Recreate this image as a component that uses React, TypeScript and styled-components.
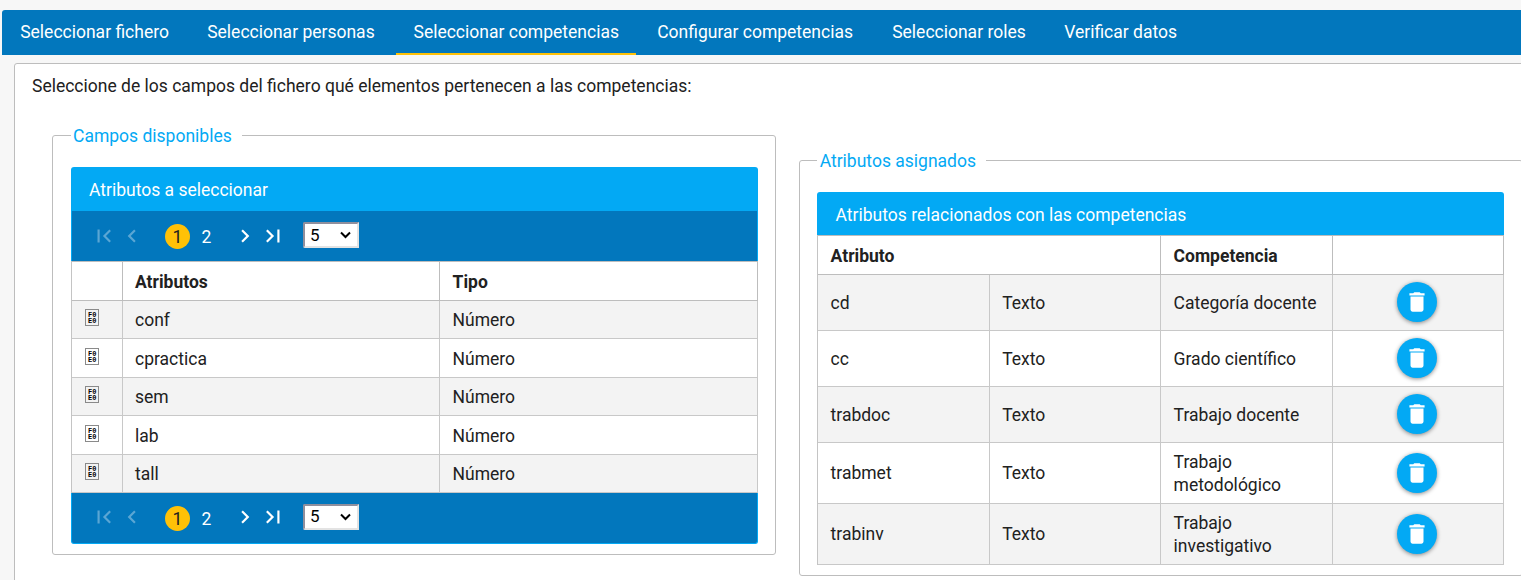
import React from "react";
import styled, { createGlobalStyle } from "styled-components";

const GlobalStyle = createGlobalStyle`
  * { box-sizing: border-box; }
  html, body { margin: 0; height: 580px; overflow: hidden; }
  body {
    background: #f7f7f7;
    color: #212121;
    font: 17.5px/23px Roboto, "Liberation Sans", sans-serif;
  }
`;

const Page = styled.div`
  height: 580px;
  overflow: hidden;
  padding: 10px 0 0 2px;
`;

const TabBar = styled.nav`
  display: flex;
  gap: 3px;
  height: 45px;
  background: #0277bd;
  border-radius: 3px 0 0 0;
`;

const Tab = styled.a<{ $active?: boolean; $width: number }>`
  width: ${(p) => p.$width}px;
  padding: 11px 0 0 ${(p) => (p.$active ? 17.5 : 18.2)}px;
  color: #fff;
  white-space: nowrap;
  border-bottom: 2px solid ${(p) => (p.$active ? "#ffc107" : "transparent")};
`;

const Panel = styled.main`
  width: 1540px;
  height: 560px;
  margin: 8px 0 0 12px;
  padding: 11px 0 0 17px;
  background: #fff;
  border: 1px solid #bdbdbd;
  border-radius: 3px;
`;

const Intro = styled.p`
  margin: 0;
`;

const Columns = styled.div`
  display: flex;
  align-items: flex-start;
  gap: 23px;
  margin-left: 20px;
`;

const Group = styled.fieldset<{ $top: number; $height: number; $inset: number }>`
  flex: none;
  width: 724px;
  height: ${(p) => p.$height}px;
  margin: ${(p) => p.$top}px 0 0;
  padding: 21px 0 0 ${(p) => p.$inset}px;
  border: 1px solid #bdbdbd;
  border-radius: 3px;
`;

const GroupTitle = styled.legend<{ $indent: number }>`
  height: 21px;
  padding: 0 10px 0 ${(p) => p.$indent}px;
  line-height: 22px;
  color: #03a9f4;
`;

const TableTitle = styled.div<{ $height: number; $indent: number }>`
  width: 687px;
  height: ${(p) => p.$height}px;
  padding-left: ${(p) => p.$indent}px;
  line-height: 47px;
  color: #fff;
  background: #03a9f4;
  border-radius: 3px 3px 0 0;
`;

const PagerBar = styled.div<{ $bottom?: boolean }>`
  display: flex;
  align-items: center;
  width: 687px;
  height: ${(p) => (p.$bottom ? 51 : 50)}px;
  padding: 0 0 ${(p) => (p.$bottom ? 1 : 0)}px 19px;
  color: #fff;
  background: #0277bd;
  border: 0 solid #03a9f4;
  border-width: 0 1px ${(p) => (p.$bottom ? 1 : 0)}px;
  border-radius: ${(p) => (p.$bottom ? "0 0 3px 3px" : "0")};
`;

const PagerIcon = styled.svg<{ $gap?: number; $off?: boolean }>`
  flex: none;
  width: 26px;
  height: 26px;
  margin: 0 0 1px ${(p) => p.$gap ?? 0}px;
  fill: #fff;
  opacity: ${(p) => (p.$off ? 0.35 : 1)};
`;

const PageNumber = styled.span<{ $current?: boolean }>`
  width: 25px;
  height: 25px;
  margin: 1px 0 0 ${(p) => (p.$current ? 20 : 4)}px;
  line-height: 26px;
  text-align: center;
  border-radius: 50%;
  color: ${(p) => (p.$current ? "#212121" : "#fff")};
  background: ${(p) => (p.$current ? "#ffc107" : "transparent")};
`;

const SizeSelect = styled.div`
  display: flex;
  align-items: center;
  justify-content: space-between;
  width: 56px;
  height: 26px;
  margin: 0 0 2px 17px;
  padding: 0 6px 0 5px;
  color: #000;
  background: #fff;
  border: 2px solid;
  border-color: #8f8f9d #e3e3e3 #e3e3e3 #8f8f9d;
  border-radius: 2px 0 0 2px;
  font-size: 17px;
`;

const Grid = styled.table`
  width: 687px;
  table-layout: fixed;
  border-spacing: 0;
  border-left: 1px solid #c4c4c4;
`;

const Row = styled.tr<{ $height: number; $shaded?: boolean }>`
  height: ${(p) => p.$height}px;
  background: ${(p) => (p.$shaded ? "#f3f3f3" : "#fff")};
`;

const Head = styled.th<{ $indent?: number }>`
  padding: 2px 0 0 ${(p) => p.$indent ?? 12.6}px;
  text-align: left;
  font-weight: 700;
  border: 1px solid #bdbdbd;
  border-left: 0;
`;

const Cell = styled.td<{ $drop?: number; $indent?: number }>`
  padding: ${(p) => p.$drop ?? 2}px 0 0 ${(p) => p.$indent ?? 12.6}px;
  vertical-align: middle;
  border: 1px solid #c8c8c8;
  border-width: 0 1px 1px 0;
`;

const ActionCell = styled(Cell)`
  padding: 0 2px 1px 0;
`;

const MissingGlyph = styled.span`
  display: block;
  width: 14px;
  height: 17px;
  margin: 0 0 4px;
  padding: 2px 0 0 2px;
  border: 1px solid #8a8a8a;
  font: 700 7px/6px "Liberation Mono", monospace;
  color: #000;
`;

const DeleteButton = styled.button`
  display: flex;
  align-items: center;
  justify-content: center;
  width: 40px;
  height: 40px;
  margin: 0 auto;
  padding: 0;
  border: 0;
  border-radius: 50%;
  background: #03a9f4;
  box-shadow: 0 1px 4px rgba(0, 0, 0, 0.45);
`;

const ICONS = {
  first: "M18.41 16.59 13.82 12l4.59-4.59L17 6l-6 6 6 6zM6 6h2v12H6z",
  prev: "M15.41 7.41 14 6l-6 6 6 6 1.41-1.41L10.83 12z",
  next: "M10 6 8.59 7.41 13.17 12l-4.58 4.59L10 18l6-6z",
  last: "M5.59 7.41 10.18 12l-4.59 4.59L7 18l6-6-6-6zM16 6h2v12h-2z",
  trash:
    "M6 19c0 1.1.9 2 2 2h8c1.1 0 2-.9 2-2V7H6zM19 4h-3.5l-1-1h-5l-1 1H5v2h14z",
};

const tabs = [
  { label: "Seleccionar fichero", width: 184 },
  { label: "Seleccionar personas", width: 204 },
  { label: "Seleccionar competencias", width: 240 },
  { label: "Configurar competencias", width: 232 },
  { label: "Seleccionar roles", width: 169 },
  { label: "Verificar datos", width: 150 },
];

const fields = [
  { name: "conf", height: 38 },
  { name: "cpractica", height: 39 },
  { name: "sem", height: 38 },
  { name: "lab", height: 39 },
  { name: "tall", height: 38 },
];

const assigned = [
  { name: "cd", skill: "Categoría docente", height: 56, drop: 2 },
  { name: "cc", skill: "Grado científico", height: 56, drop: 2 },
  { name: "trabdoc", skill: "Trabajo docente", height: 56, drop: 2 },
  { name: "trabmet", skill: "Trabajo metodológico", height: 61, drop: 0 },
  { name: "trabinv", skill: "Trabajo investigativo", height: 61, drop: 0 },
];

function Pager({ bottom }: { bottom?: boolean }) {
  return (
    <PagerBar $bottom={bottom}>
      <PagerIcon viewBox="0 0 24 24" $off><path d={ICONS.first} /></PagerIcon>
      <PagerIcon viewBox="0 0 24 24" $off $gap={2}><path d={ICONS.prev} /></PagerIcon>
      <PageNumber $current>1</PageNumber>
      <PageNumber>2</PageNumber>
      <PagerIcon viewBox="0 0 24 24" $gap={13}><path d={ICONS.next} /></PagerIcon>
      <PagerIcon viewBox="0 0 24 24" $gap={2}><path d={ICONS.last} /></PagerIcon>
      <SizeSelect>
        <span>5</span>
        <svg width="11" height="8" viewBox="0 0 11 8" fill="none" stroke="#000" strokeWidth="2">
          <path d="M1 1.5 5.5 6 10 1.5" />
        </svg>
      </SizeSelect>
    </PagerBar>
  );
}

export default function App() {
  return (
    <Page>
      <GlobalStyle />
      <TabBar>
        {tabs.map((t, i) => (
          <Tab key={t.label} $width={t.width} $active={i === 2}>{t.label}</Tab>
        ))}
      </TabBar>
      <Panel>
        <Intro>Seleccione de los campos del fichero qué elementos pertenecen a las competencias:</Intro>
        <Columns>
          <Group $top={27} $height={430} $inset={18}>
            <GroupTitle $indent={2}>Campos disponibles</GroupTitle>
            <TableTitle $height={44} $indent={18}>Atributos a seleccionar</TableTitle>
            <Pager />
            <Grid>
              <colgroup>
                <col style={{ width: 51 }} />
                <col style={{ width: 317 }} />
                <col style={{ width: 318 }} />
              </colgroup>
              <tbody>
                <Row $height={40}>
                  <Head />
                  <Head $indent={12}>Atributos</Head>
                  <Head>Tipo</Head>
                </Row>
                {fields.map((f, i) => (
                  <Row key={f.name} $height={f.height} $shaded={i % 2 === 0}>
                    <Cell $drop={0} $indent={13}><MissingGlyph>F0<br />E0</MissingGlyph></Cell>
                    <Cell $indent={12}>{f.name}</Cell>
                    <Cell>Número</Cell>
                  </Row>
                ))}
              </tbody>
            </Grid>
            <Pager bottom />
          </Group>
          <Group $top={52} $height={426} $inset={17}>
            <GroupTitle $indent={2.7}>Atributos asignados</GroupTitle>
            <TableTitle $height={43} $indent={18.6}>Atributos relacionados con las competencias</TableTitle>
            <Grid>
              <colgroup>
                <col style={{ width: 172 }} />
                <col style={{ width: 171 }} />
                <col style={{ width: 172 }} />
                <col style={{ width: 171 }} />
              </colgroup>
              <tbody>
                <Row $height={40}>
                  <Head colSpan={2}>Atributo</Head>
                  <Head>Competencia</Head>
                  <Head />
                </Row>
                {assigned.map((a, i) => (
                  <Row key={a.name} $height={a.height} $shaded={i % 2 === 0}>
                    <Cell $drop={a.drop}>{a.name}</Cell>
                    <Cell $drop={a.drop} $indent={12.2}>Texto</Cell>
                    <Cell>{a.skill}</Cell>
                    <ActionCell>
                      <DeleteButton aria-label="Eliminar">
                        <svg width="26" height="26" viewBox="0 0 24 24" fill="#fff">
                          <path d={ICONS.trash} />
                        </svg>
                      </DeleteButton>
                    </ActionCell>
                  </Row>
                ))}
              </tbody>
            </Grid>
          </Group>
        </Columns>
      </Panel>
    </Page>
  );
}
